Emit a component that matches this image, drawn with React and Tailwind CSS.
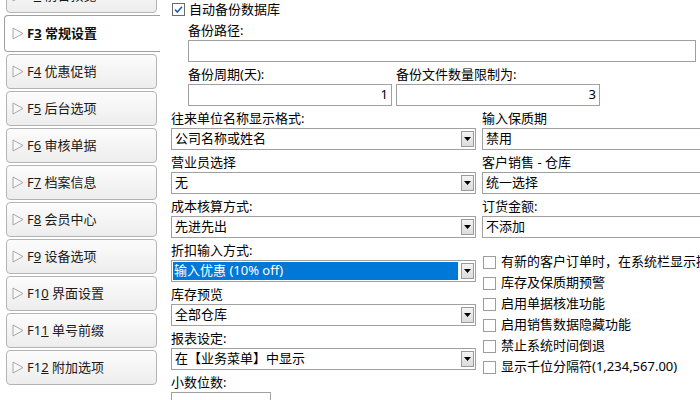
import React from 'react';

const font = { fontFamily: '"Noto Sans", "Noto Sans CJK SC", sans-serif' };

const tabs = [
  { key: '2', label: '前台预览' },
  { key: '3', label: '常规设置', active: true },
  { key: '4', label: '优惠促销' },
  { key: '5', label: '后台选项' },
  { key: '6', label: '审核单据' },
  { key: '7', label: '档案信息' },
  { key: '8', label: '会员中心' },
  { key: '9', label: '设备选项' },
  { key: '10', label: '界面设置' },
  { key: '11', label: '单号前缀' },
  { key: '12', label: '附加选项' },
];

const Arrow = () => (
  <svg width="12" height="13" viewBox="0 0 12 13" className="shrink-0">
    <polygon points="1,1 11,6.5 1,12" fill="#f8f8f8" stroke="#a8a8a8" strokeWidth="1" />
  </svg>
);

const Tab = ({ t, first }) => {
  // the F-key's last digit is underlined (accelerator)
  const head = t.key.slice(0, -1);
  const tail = t.key.slice(-1);
  return (
    <div
      className={`flex items-center gap-[3px] h-[35px] ${
        t.active
          ? 'h-[37px] ml-[1px] w-[156px] pl-[7px] bg-white border border-r-0 border-[#a0a0a0] rounded-l-[4px] font-bold text-[#111]'
          : 'ml-[3px] w-[151px] pl-[5px] border border-[#b4b4b4] rounded-[4px] bg-linear-to-b from-[#fcfcfc] to-[#ededed] text-[#1a1a1a]'
      } ${first ? '-mt-[22px]' : ''}`}
    >
      <Arrow />
      <span className="text-[13px] whitespace-nowrap">
        F{head}<span className="underline">{tail}</span> {t.label}
      </span>
    </div>
  );
};

const Label = ({ children }) => (
  <div className="h-[20px] leading-[20px] text-[13px] whitespace-nowrap">{children}</div>
);

const Input = ({ value, className = '' }) => (
  <div className={`h-[22px] border border-[#a0a0a0] bg-white flex items-center justify-end pr-[3px] text-[13px] ${className}`}>
    {value}
  </div>
);

const TextBox = ({ value }) => (
  <div className="h-[22px] border border-[#a0a0a0] bg-white flex items-center pl-[3px] text-[13px] whitespace-nowrap">
    {value}
  </div>
);

const Select = ({ value, selected }) => (
  <div className="h-[22px] w-[305px] border border-[#a0a0a0] bg-white flex items-center pr-[1px] text-[13px]">
    {selected ? (
      <div className="flex-1 h-[18px] ml-[1px] mr-[3px] bg-[#0078d7] text-white flex items-center pl-[1px] whitespace-nowrap">
        {value}
      </div>
    ) : (
      <div className="flex-1 pl-[3px] whitespace-nowrap">{value}</div>
    )}
    <div className="w-[13px] h-[16px] border border-[#9a9a9a] bg-linear-to-b from-[#f4f4f4] to-[#dcdcdc] flex items-center justify-center">
      <svg width="7" height="4" viewBox="0 0 7 4">
        <polygon points="0,0 7,0 3.5,4" fill="#000" />
      </svg>
    </div>
  </div>
);

const Check = ({ checked }) => (
  <svg width="13" height="13" viewBox="0 0 13 13" className="shrink-0">
    <rect x="0.5" y="0.5" width="12" height="12" fill="#fff" stroke={checked ? '#6b6b6b' : '#9c9c9c'} />
    {checked && <path d="M3 6.5 L5.3 9 L10 3.8" fill="none" stroke="#1c5fb8" strokeWidth="1.6" />}
  </svg>
);

const leftFields = [
  { label: '往来单位名称显示格式:', value: '公司名称或姓名' },
  { label: '营业员选择', value: '无' },
  { label: '成本核算方式:', value: '先进先出' },
  { label: '折扣输入方式:', value: '输入优惠 (10% off)', selected: true },
  { label: '库存预览', value: '全部仓库' },
  { label: '报表设定:', value: '在【业务菜单】中显示' },
];

const rightFields = [
  { label: '输入保质期', value: '禁用' },
  { label: '客户销售 - 仓库', value: '统一选择' },
  { label: '订货金额:', value: '不添加' },
];

const options = [
  '有新的客户订单时，在系统栏显示提示',
  '库存及保质期预警',
  '启用单据核准功能',
  '启用销售数据隐藏功能',
  '禁止系统时间倒退',
  '显示千位分隔符(1,234,567.00)',
];

export default function App() {
  return (
    <div className="w-[700px] h-[400px] overflow-hidden flex bg-white text-black" style={font}>
      {/* Tabs */}
      <div className="w-[160px] shrink-0 flex">
        <div className="w-[1px] ml-[3px] bg-[#c9cdd3]" />
        <div className="flex-1 flex flex-col gap-[2px]">
          {tabs.map((t, i) => (
            <Tab key={t.key} t={t} first={i === 0} />
          ))}
        </div>
      </div>

      {/* Settings */}
      <div className="flex-1 min-w-0 pl-[11px] flex flex-col">
        <div className="h-[22px] flex items-center gap-[4px] pl-[1px]">
          <Check checked />
          <span className="text-[13px]">自动备份数据库</span>
        </div>
        <div className="pl-[17px] flex flex-col">
          <Label>备份路径:</Label>
          <Input className="w-[508px]" />
          <div className="mt-[2px] flex gap-[4px]">
            <div className="flex flex-col">
              <Label>备份周期(天):</Label>
              <Input value="1" className="w-[204px]" />
            </div>
            <div className="flex flex-col">
              <Label>备份文件数量限制为:</Label>
              <Input value="3" className="w-[204px]" />
            </div>
          </div>
        </div>

        <div className="mt-[2px] flex gap-[6px]">
          <div className="flex flex-col gap-[2px]">
            {leftFields.map((f) => (
              <div key={f.label} className="flex flex-col">
                <Label>{f.label}</Label>
                <Select value={f.value} selected={f.selected} />
              </div>
            ))}
            <div className="flex flex-col">
              <Label>小数位数:</Label>
              <div className="h-[22px] w-[100px] border border-[#a0a0a0] bg-white" />
            </div>
          </div>
          <div className="w-[240px] shrink-0 flex flex-col">
            <div className="flex flex-col gap-[2px]">
              {rightFields.map((f) => (
                <div key={f.label} className="flex flex-col">
                  <Label>{f.label}</Label>
                  <TextBox value={f.value} />
                </div>
              ))}
            </div>
            <div className="mt-[14px] flex flex-col pl-[1px]">
              {options.map((o) => (
                <div key={o} className="h-[21px] flex items-center gap-[5px]">
                  <Check />
                  <span className="text-[13px] whitespace-nowrap">{o}</span>
                </div>
              ))}
            </div>
          </div>
        </div>
      </div>
    </div>
  );
}
